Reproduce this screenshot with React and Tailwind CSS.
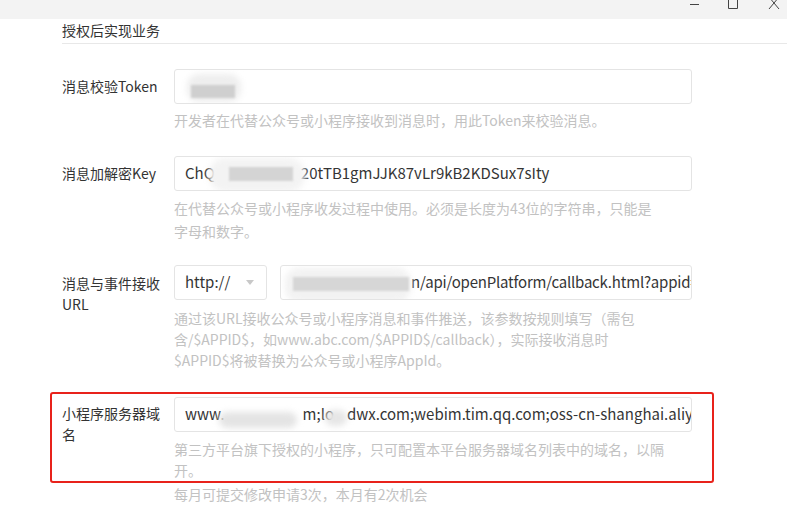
export default function App() {
  // shared pieces
  const font = { fontFamily: '"Noto Sans CJK SC", "Noto Sans", sans-serif' };
  const inputCls =
    "relative h-[35px] border border-[#e4e4e4] rounded-[3px] bg-white flex items-center px-[10px] overflow-hidden whitespace-nowrap text-[15px] text-[#353535]";
  const hintCls = "text-[14px] leading-[21px] text-[#c2c2c2]";

  return (
    <div className="w-[787px] h-[515px] bg-white overflow-hidden" style={font}>
      {/* window title bar */}
      <div className="h-[19px] bg-[#f3f3f3] flex justify-end items-start pr-[7px]">
        <svg width="100" height="10" viewBox="0 0 100 10">
          <path d="M10 4.5 H19" stroke="#444" strokeWidth="1" />
          <path d="M48.5 -2 V8.5 H57.5 V-2" stroke="#444" strokeWidth="1" fill="none" />
          <path d="M89 -3 L99 9 M99 -3 L89 9" stroke="#444" strokeWidth="1" />
        </svg>
      </div>

      <div className="pl-[62px]">
        {/* section title */}
        <div className="h-[24px] pt-[1px] text-[14px] leading-[20px] text-[#333]">授权后实现业务</div>
        <div className="h-px bg-[#e8e8e8]" />

        {/* token */}
        <div className="flex mt-[25px]">
          <div className="w-[112px] h-[35px] flex items-center text-[14px] text-[#333]">消息校验Token</div>
          <div className="w-[518px]">
            <div className={inputCls}>
              <span className="absolute left-[12px] top-[4px] w-[54px] h-[28px] rounded-[12px] bg-[#eeeeee] blur-[3px]" />
              <span className="absolute left-[16px] top-[15px] w-[44px] h-[13px] bg-[#cfcfcf] blur-[1px]" />
            </div>
            <div className={`${hintCls} mt-[6px]`}>开发者在代替公众号或小程序接收到消息时，用此Token来校验消息。</div>
          </div>
        </div>

        {/* key */}
        <div className="flex mt-[25px]">
          <div className="w-[112px] h-[35px] flex items-center text-[14px] text-[#333]">消息加解密Key</div>
          <div className="w-[518px]">
            <div className={inputCls}>
              <span className="shrink-0">ChQ</span>
              <span className="inline-block w-[86px] shrink-0" />
              <span className="shrink-0">20tTB1gmJJK87vLr9kB2KDSux7sIty</span>
              <span className="absolute left-[34px] top-[1px] w-[96px] h-[34px] rounded-[16px] bg-[#f3f3f3] blur-[3px]" />
              <span className="absolute left-[54px] top-[10px] w-[64px] h-[14px] bg-[#d4d4d4] blur-[1px]" />
            </div>
            <div className="text-[14px] leading-[23px] text-[#c2c2c2] mt-[6px]">
              在代替公众号或小程序收发过程中使用。必须是长度为43位的字符串，只能是
              <br />
              字母和数字。
            </div>
          </div>
        </div>

        {/* url */}
        <div className="flex mt-[22px]">
          <div className="w-[112px] pt-[8px] text-[14px] leading-[21px] text-[#333]">
            消息与事件接收
            <br />
            URL
          </div>
          <div className="w-[518px]">
            <div className="flex gap-[13px]">
              <div className={`${inputCls} w-[93px] justify-between shrink-0`}>
                <span>http://</span>
                <span className="block w-0 h-0 border-l-[4px] border-r-[4px] border-t-[5px] border-l-transparent border-r-transparent border-t-[#c8c8c8] mr-[2px]" />
              </div>
              <div className={`${inputCls} flex-1`}>
                <span className="inline-block w-[120px] shrink-0" />
                <span className="shrink-0 tracking-[-0.2px]">n/api/openPlatform/callback.html?appid=</span>
                <span className="absolute left-[4px] top-[2px] w-[126px] h-[34px] rounded-[14px] bg-[#f2f2f2] blur-[3px]" />
                <span className="absolute left-[12px] top-[11px] w-[116px] h-[14px] bg-[#d6d6d6] blur-[1px]" />
              </div>
            </div>
            <div className={`${hintCls} mt-[8px]`}>
              通过该URL接收公众号或小程序消息和事件推送，该参数按规则填写（需包
              <br />
              含/$APPID$，如www.abc.com/$APPID$/callback），实际接收消息时
              <br />
              $APPID$将被替换为公众号或小程序AppId。
            </div>
          </div>
        </div>

        {/* domain, outlined in red */}
        <div className="-ml-[12px] w-[664px] mt-[21px] border-[2.5px] border-[#e8221b] rounded-[3px] pl-[10px] pt-[3px] flex">
          <div className="w-[112px] pt-[6px] text-[14px] leading-[21px] text-[#333]">
            小程序服务器域
            <br />
            名
          </div>
          <div className="w-[518px]">
            <div className={inputCls}>
              <span className="shrink-0">www.</span>
              <span className="inline-block w-[78px] shrink-0" />
              <span className="shrink-0">m;lo</span>
              <span className="inline-block w-[13px] shrink-0" />
              <span className="shrink-0">dwx.com;webim.tim.qq.com;oss-cn-shanghai.aliyun.com</span>
              <span className="absolute left-[44px] top-[14px] w-[78px] h-[16px] rounded-[8px] bg-[#e4e4e4] blur-[3px]" />
              <span className="absolute left-[150px] top-[12px] w-[22px] h-[16px] rounded-[8px] bg-[#e6e6e6] blur-[3px]" />
            </div>
            <div className={`${hintCls} mt-[7px] leading-[20px]`}>
              第三方平台旗下授权的小程序，只可配置本平台服务器域名列表中的域名，以隔
              <br />
              开。
            </div>
          </div>
        </div>
        <div className={`${hintCls} ml-[112px] mt-[1px]`}>每月可提交修改申请3次，本月有2次机会</div>
      </div>
    </div>
  );
}
